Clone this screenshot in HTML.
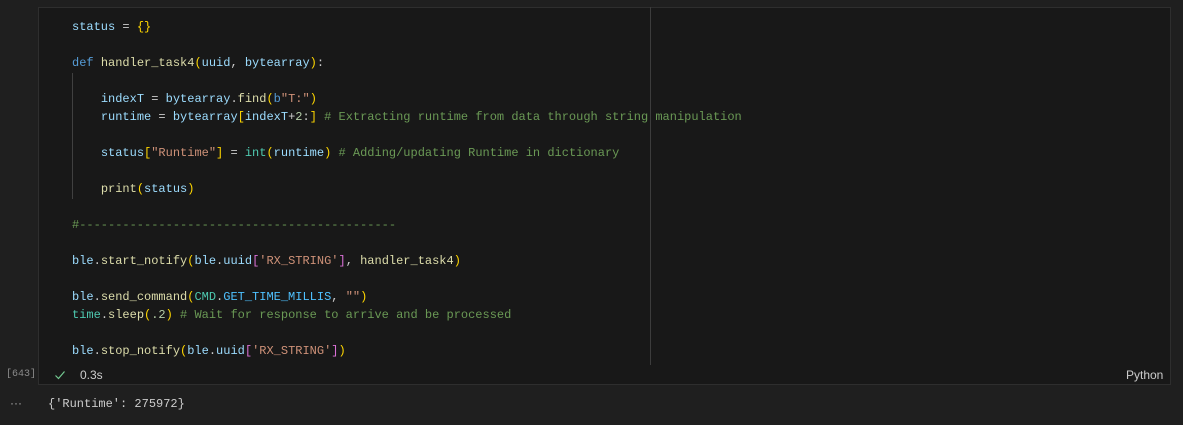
<!DOCTYPE html>
<html><head><style>
body{margin:0;width:1183px;height:425px;background:#1f1f1f;overflow:hidden;font-family:"Liberation Mono",monospace;position:relative}
.cell{position:absolute;left:38px;top:7px;width:1133px;height:378px;background:#181818;border:1px solid #2e2e2e;box-sizing:border-box}
.code{position:absolute;left:72px;top:18px;font-size:12px;line-height:18px;color:#cccccc;white-space:pre}
.v{color:#9cdcfe}.k{color:#569cd6}.f{color:#dcdcaa}.b{color:#ffd700}.s{color:#ce9178}.c{color:#6a9955}.t{color:#4ec9b0}.p{color:#da70d6}.n{color:#b5cea8}.cn{color:#4fc1ff}
.guide{position:absolute;left:72px;top:73px;width:1px;height:126px;background:#404040}
.ruler{position:absolute;left:650px;top:7px;width:1px;height:358px;background:#3c3c3c}
.ui{position:absolute;font-family:"Liberation Sans",sans-serif;font-size:12px;color:#cccccc}
</style></head><body>
<div class="cell"></div>
<div class="ruler"></div>
<div class="guide"></div>
<div class="code"><span class="v">status</span> = <span class="b">{}</span>

<span class="k">def</span> <span class="f">handler_task4</span><span class="b">(</span><span class="v">uuid</span>, <span class="v">bytearray</span><span class="b">)</span>:

    <span class="v">indexT</span> = <span class="v">bytearray</span>.<span class="f">find</span><span class="b">(</span><span class="k">b</span><span class="s">"T:"</span><span class="b">)</span>
    <span class="v">runtime</span> = <span class="v">bytearray</span><span class="b">[</span><span class="v">indexT</span>+<span class="n">2</span>:<span class="b">]</span> <span class="c"># Extracting runtime from data through string manipulation</span>

    <span class="v">status</span><span class="b">[</span><span class="s">"Runtime"</span><span class="b">]</span> = <span class="t">int</span><span class="b">(</span><span class="v">runtime</span><span class="b">)</span> <span class="c"># Adding/updating Runtime in dictionary</span>

    <span class="f">print</span><span class="b">(</span><span class="v">status</span><span class="b">)</span>

<span class="c">#--------------------------------------------</span>

<span class="v">ble</span>.<span class="f">start_notify</span><span class="b">(</span><span class="v">ble</span>.<span class="v">uuid</span><span class="p">[</span><span class="s">'RX_STRING'</span><span class="p">]</span>, <span class="f">handler_task4</span><span class="b">)</span>

<span class="v">ble</span>.<span class="f">send_command</span><span class="b">(</span><span class="t">CMD</span>.<span class="cn">GET_TIME_MILLIS</span>, <span class="s">""</span><span class="b">)</span>
<span class="t">time</span>.<span class="f">sleep</span><span class="b">(</span><span class="n">.2</span><span class="b">)</span> <span class="c"># Wait for response to arrive and be processed</span>

<span class="v">ble</span>.<span class="f">stop_notify</span><span class="b">(</span><span class="v">ble</span>.<span class="v">uuid</span><span class="p">[</span><span class="s">'RX_STRING'</span><span class="p">]</span><span class="b">)</span></div>
<div class="ui" style="left:6px;top:369px;font-family:'Liberation Mono',monospace;font-size:10px;color:#8a8a8a">[643]</div>
<svg style="position:absolute;left:54px;top:369px" width="12" height="12" viewBox="0 0 12 12"><path d="M1.5 6.5 L4.5 9.5 L10.5 2.5" stroke="#73c991" stroke-width="1.2" fill="none"/></svg>
<div class="ui" style="left:80px;top:368px">0.3s</div>
<div class="ui" style="left:1126px;top:368px">Python</div>
<div class="ui" style="left:10px;top:396px;color:#aaa">···</div>
<div class="ui" style="left:48px;top:397px;font-family:'Liberation Mono',monospace;font-size:12px">{'Runtime': 275972}</div>
</body></html>
